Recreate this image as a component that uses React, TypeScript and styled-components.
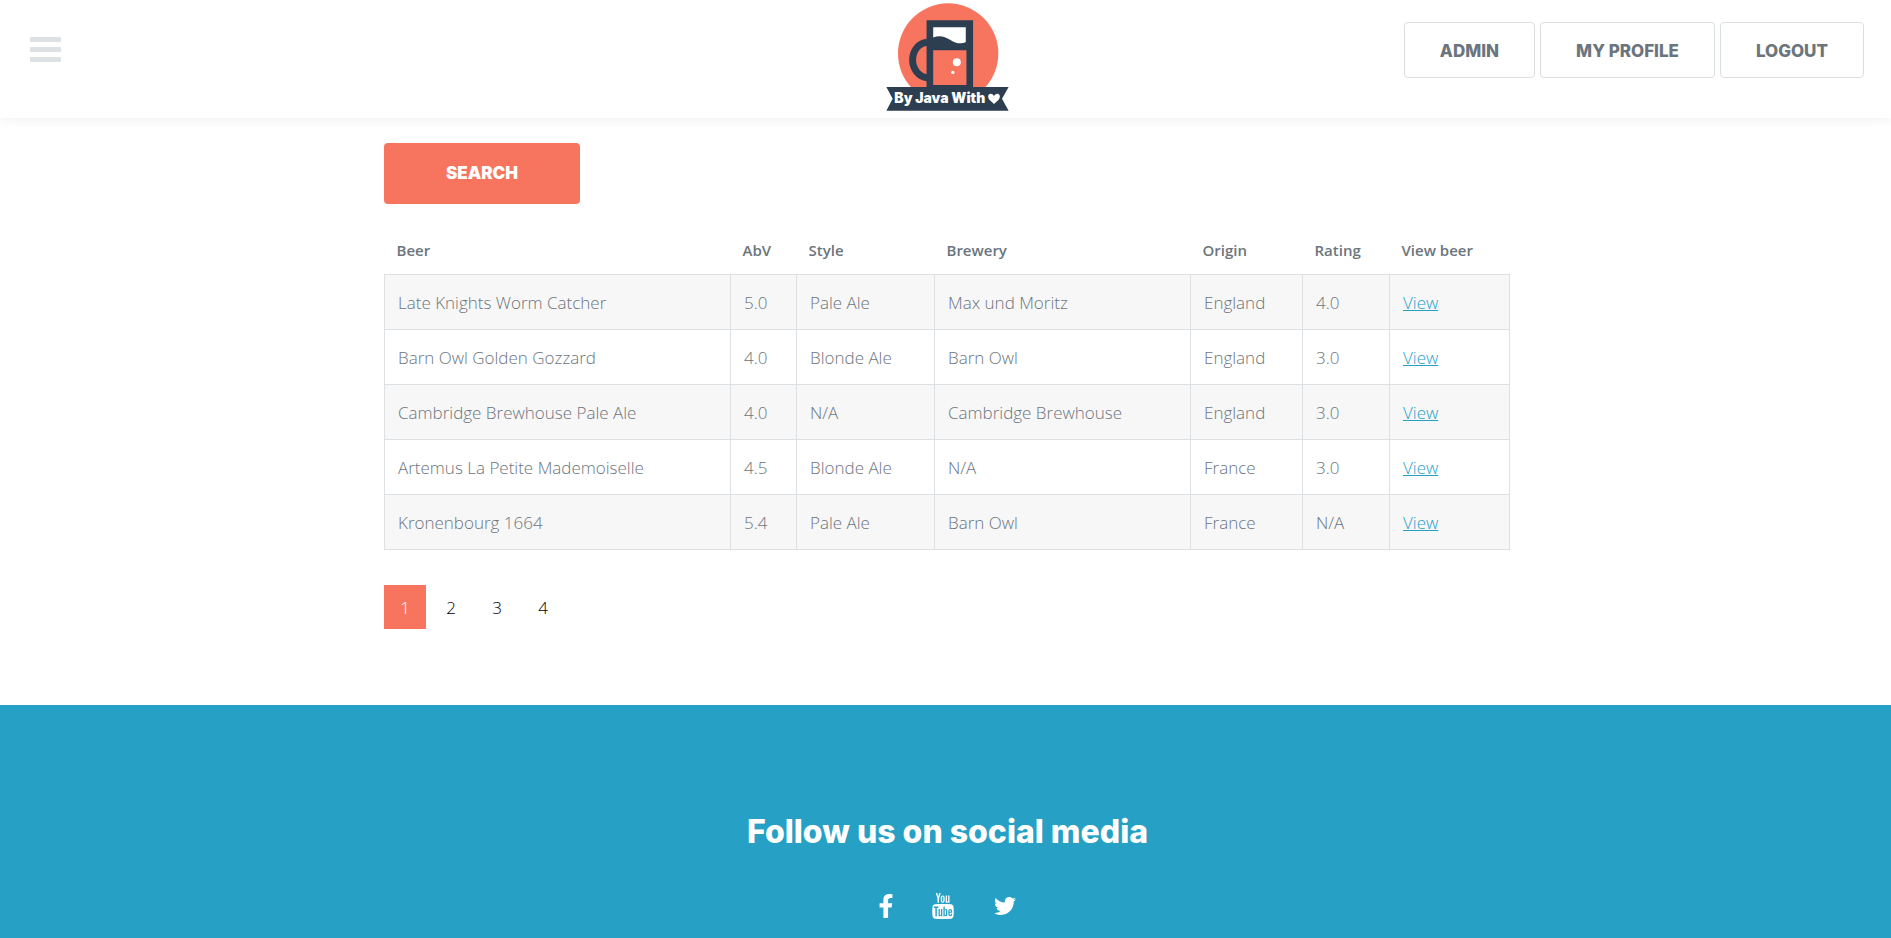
import React from "react";
import styled, { createGlobalStyle } from "styled-components";
import { FaFacebookF, FaTwitter } from "react-icons/fa";
import { TfiYoutube } from "react-icons/tfi";

const GlobalStyle = createGlobalStyle`
  *, *::before, *::after { box-sizing: border-box; }
  body {
    margin: 0;
    background: #ffffff;
    color: #6c757d;
    font: 300 17px/26px "Open Sans", sans-serif;
    overflow-x: hidden;
  }
`;

const headingFont = `Inter, "Open Sans", sans-serif`;

const Header = styled.header`
  display: grid;
  grid-template-columns: 1fr auto 1fr;
  align-items: start;
  height: 118px;
  padding: 0 27px 0 30px;
  background: #ffffff;
  box-shadow: 0 0 12px rgba(0, 0, 0, 0.08);
`;

const MenuButton = styled.button`
  display: flex;
  flex-direction: column;
  justify-self: start;
  gap: 5px;
  margin-top: 37px;
  padding: 0;
  border: 0;
  background: none;
  cursor: pointer;
`;

const MenuBar = styled.span`
  width: 31px;
  height: 5px;
  border-radius: 1px;
  background: #dde1e4;
`;

const LogoLink = styled.a`
  display: block;
  padding-top: 3px;
`;

const LogoDrawing = styled.svg`
  display: block;
  width: 123px;
  height: 108px;
`;

const Nav = styled.nav`
  display: flex;
  justify-content: flex-end;
  gap: 5px;
  padding-top: 22px;
`;

const NavLink = styled.a`
  padding: 15px 35px 13px;
  border: 1px solid #dcdfe0;
  border-radius: 4px;
  color: #6c757d;
  font: 800 17px/26px ${headingFont};
  text-decoration: none;
  white-space: nowrap;
`;

const Main = styled.main`
  max-width: 1129px;
  margin: 0 auto;
  padding: 25px 0 76px 3px;
`;

const SearchButton = styled.button`
  display: block;
  width: 196px;
  height: 61px;
  padding: 0 0 2px;
  border: 0;
  border-radius: 4px;
  background: #f7755f;
  color: #ffffff;
  font: 900 17px/26px ${headingFont};
  cursor: pointer;
`;

const BeerTable = styled.table`
  width: 100%;
  margin: 22px 0 35px;
  border-collapse: collapse;
  table-layout: fixed;
`;

const Column = styled.col<{ $share: number }>`
  width: ${({ $share }) => ($share / 1125) * 100}%;
`;

const HeadCell = styled.th`
  height: 48px;
  padding: 0 12px;
  font-size: 15px;
  font-weight: 600;
  text-align: left;
  white-space: nowrap;
`;

const BodyRow = styled.tr`
  &:nth-child(odd) { background: #f7f7f7; }
`;

const Cell = styled.td`
  height: 55px;
  padding: 2px 13px 0;
  border: 1px solid #dde1e4;
`;

const ViewLink = styled.a`
  color: #26a1c5;
  text-decoration: underline;
`;

const Pagination = styled.nav`
  display: flex;
  gap: 4px;
`;

const PageLink = styled.a<{ $active?: boolean }>`
  width: 42px;
  padding: 10px 0 8px;
  background: ${({ $active }) => ($active ? "#f7755f" : "transparent")};
  color: ${({ $active }) => ($active ? "#ffffff" : "#000000")};
  text-align: center;
  text-decoration: none;
`;

const Footer = styled.footer`
  display: flex;
  flex-direction: column;
  align-items: center;
  min-height: 233px;
  padding: 107px 24px 0 28px;
  background: #26a1c5;
  color: #ffffff;
`;

const FooterTitle = styled.h2`
  margin: 0 0 41px;
  font: 800 32px/40px ${headingFont};
`;

const SocialLinks = styled.div`
  display: flex;
  align-items: center;
  gap: 37px;
`;

const SocialLink = styled.a<{ $width: number }>`
  display: flex;
  align-items: center;
  justify-content: center;
  width: ${({ $width }) => $width}px;
  height: 26px;
  color: #ffffff;

  svg { flex: none; }
`;

function Logo() {
  return (
    <LogoDrawing viewBox="78 8 370 325" role="img" aria-label="By Java With love">
      <circle cx="265" cy="160" r="151" fill="#f7755f" />
      <path
        d="M202 126C176 128 158 152 158 179S176 231 202 233"
        fill="none"
        stroke="#2c3e50"
        strokeWidth="21"
      />
      <path d="M200 60H340V262H200Z" fill="#2c3e50" />
      <path d="M220 81H318V125C302 133 288 129 272 119C254 108 238 104 220 112Z" fill="#ffffff" />
      <path d="M220 150H320V255H220Z" fill="#f7755f" />
      <circle cx="291" cy="186" r="12" fill="#ffffff" />
      <circle cx="279" cy="217" r="5" fill="#ffffff" />
      <path d="M79 261H447L427 296L447 332H79L98 296Z" fill="#2c3e50" />
      <text x="103" y="310" fill="#ffffff" fontFamily="Inter" fontWeight="900" fontSize="42">
        By Java With
      </text>
      <path
        d="M403 312L389 299C378 283 395 274 403 288C411 274 428 283 417 299Z"
        fill="#ffffff"
      />
    </LogoDrawing>
  );
}

const columns = [
  { label: "Beer", share: 346 },
  { label: "AbV", share: 66 },
  { label: "Style", share: 138 },
  { label: "Brewery", share: 256 },
  { label: "Origin", share: 112 },
  { label: "Rating", share: 87 },
  { label: "View beer", share: 120 },
];

const beers = [
  ["Late Knights Worm Catcher", "5.0", "Pale Ale", "Max und Moritz", "England", "4.0"],
  ["Barn Owl Golden Gozzard", "4.0", "Blonde Ale", "Barn Owl", "England", "3.0"],
  ["Cambridge Brewhouse Pale Ale", "4.0", "N/A", "Cambridge Brewhouse", "England", "3.0"],
  ["Artemus La Petite Mademoiselle", "4.5", "Blonde Ale", "N/A", "France", "3.0"],
  ["Kronenbourg 1664", "5.4", "Pale Ale", "Barn Owl", "France", "N/A"],
];

export default function App() {
  return (
    <>
      <GlobalStyle />
      <Header>
        <MenuButton type="button" aria-label="Menu">
          <MenuBar />
          <MenuBar />
          <MenuBar />
        </MenuButton>
        <LogoLink href="#">
          <Logo />
        </LogoLink>
        <Nav>
          <NavLink href="#">ADMIN</NavLink>
          <NavLink href="#">MY PROFILE</NavLink>
          <NavLink href="#">LOGOUT</NavLink>
        </Nav>
      </Header>
      <Main>
        <SearchButton type="button">SEARCH</SearchButton>
        <BeerTable>
          <colgroup>
            {columns.map((c) => (
              <Column key={c.label} $share={c.share} />
            ))}
          </colgroup>
          <thead>
            <tr>
              {columns.map((c) => (
                <HeadCell key={c.label} scope="col">{c.label}</HeadCell>
              ))}
            </tr>
          </thead>
          <tbody>
            {beers.map((beer) => (
              <BodyRow key={beer[0]}>
                {beer.map((value, i) => (
                  <Cell key={i}>{value}</Cell>
                ))}
                <Cell>
                  <ViewLink href="#">View</ViewLink>
                </Cell>
              </BodyRow>
            ))}
          </tbody>
        </BeerTable>
        <Pagination aria-label="Pages">
          {[1, 2, 3, 4].map((n) => (
            <PageLink key={n} href="#" $active={n === 1}>{n}</PageLink>
          ))}
        </Pagination>
      </Main>
      <Footer>
        <FooterTitle>Follow us on social media</FooterTitle>
        <SocialLinks>
          <SocialLink href="#" aria-label="Facebook" $width={16}>
            <FaFacebookF size={24} />
          </SocialLink>
          <SocialLink href="#" aria-label="YouTube" $width={24}>
            <TfiYoutube size={26} />
          </SocialLink>
          <SocialLink href="#" aria-label="Twitter" $width={26}>
            <FaTwitter size={22} />
          </SocialLink>
        </SocialLinks>
      </Footer>
    </>
  );
}
